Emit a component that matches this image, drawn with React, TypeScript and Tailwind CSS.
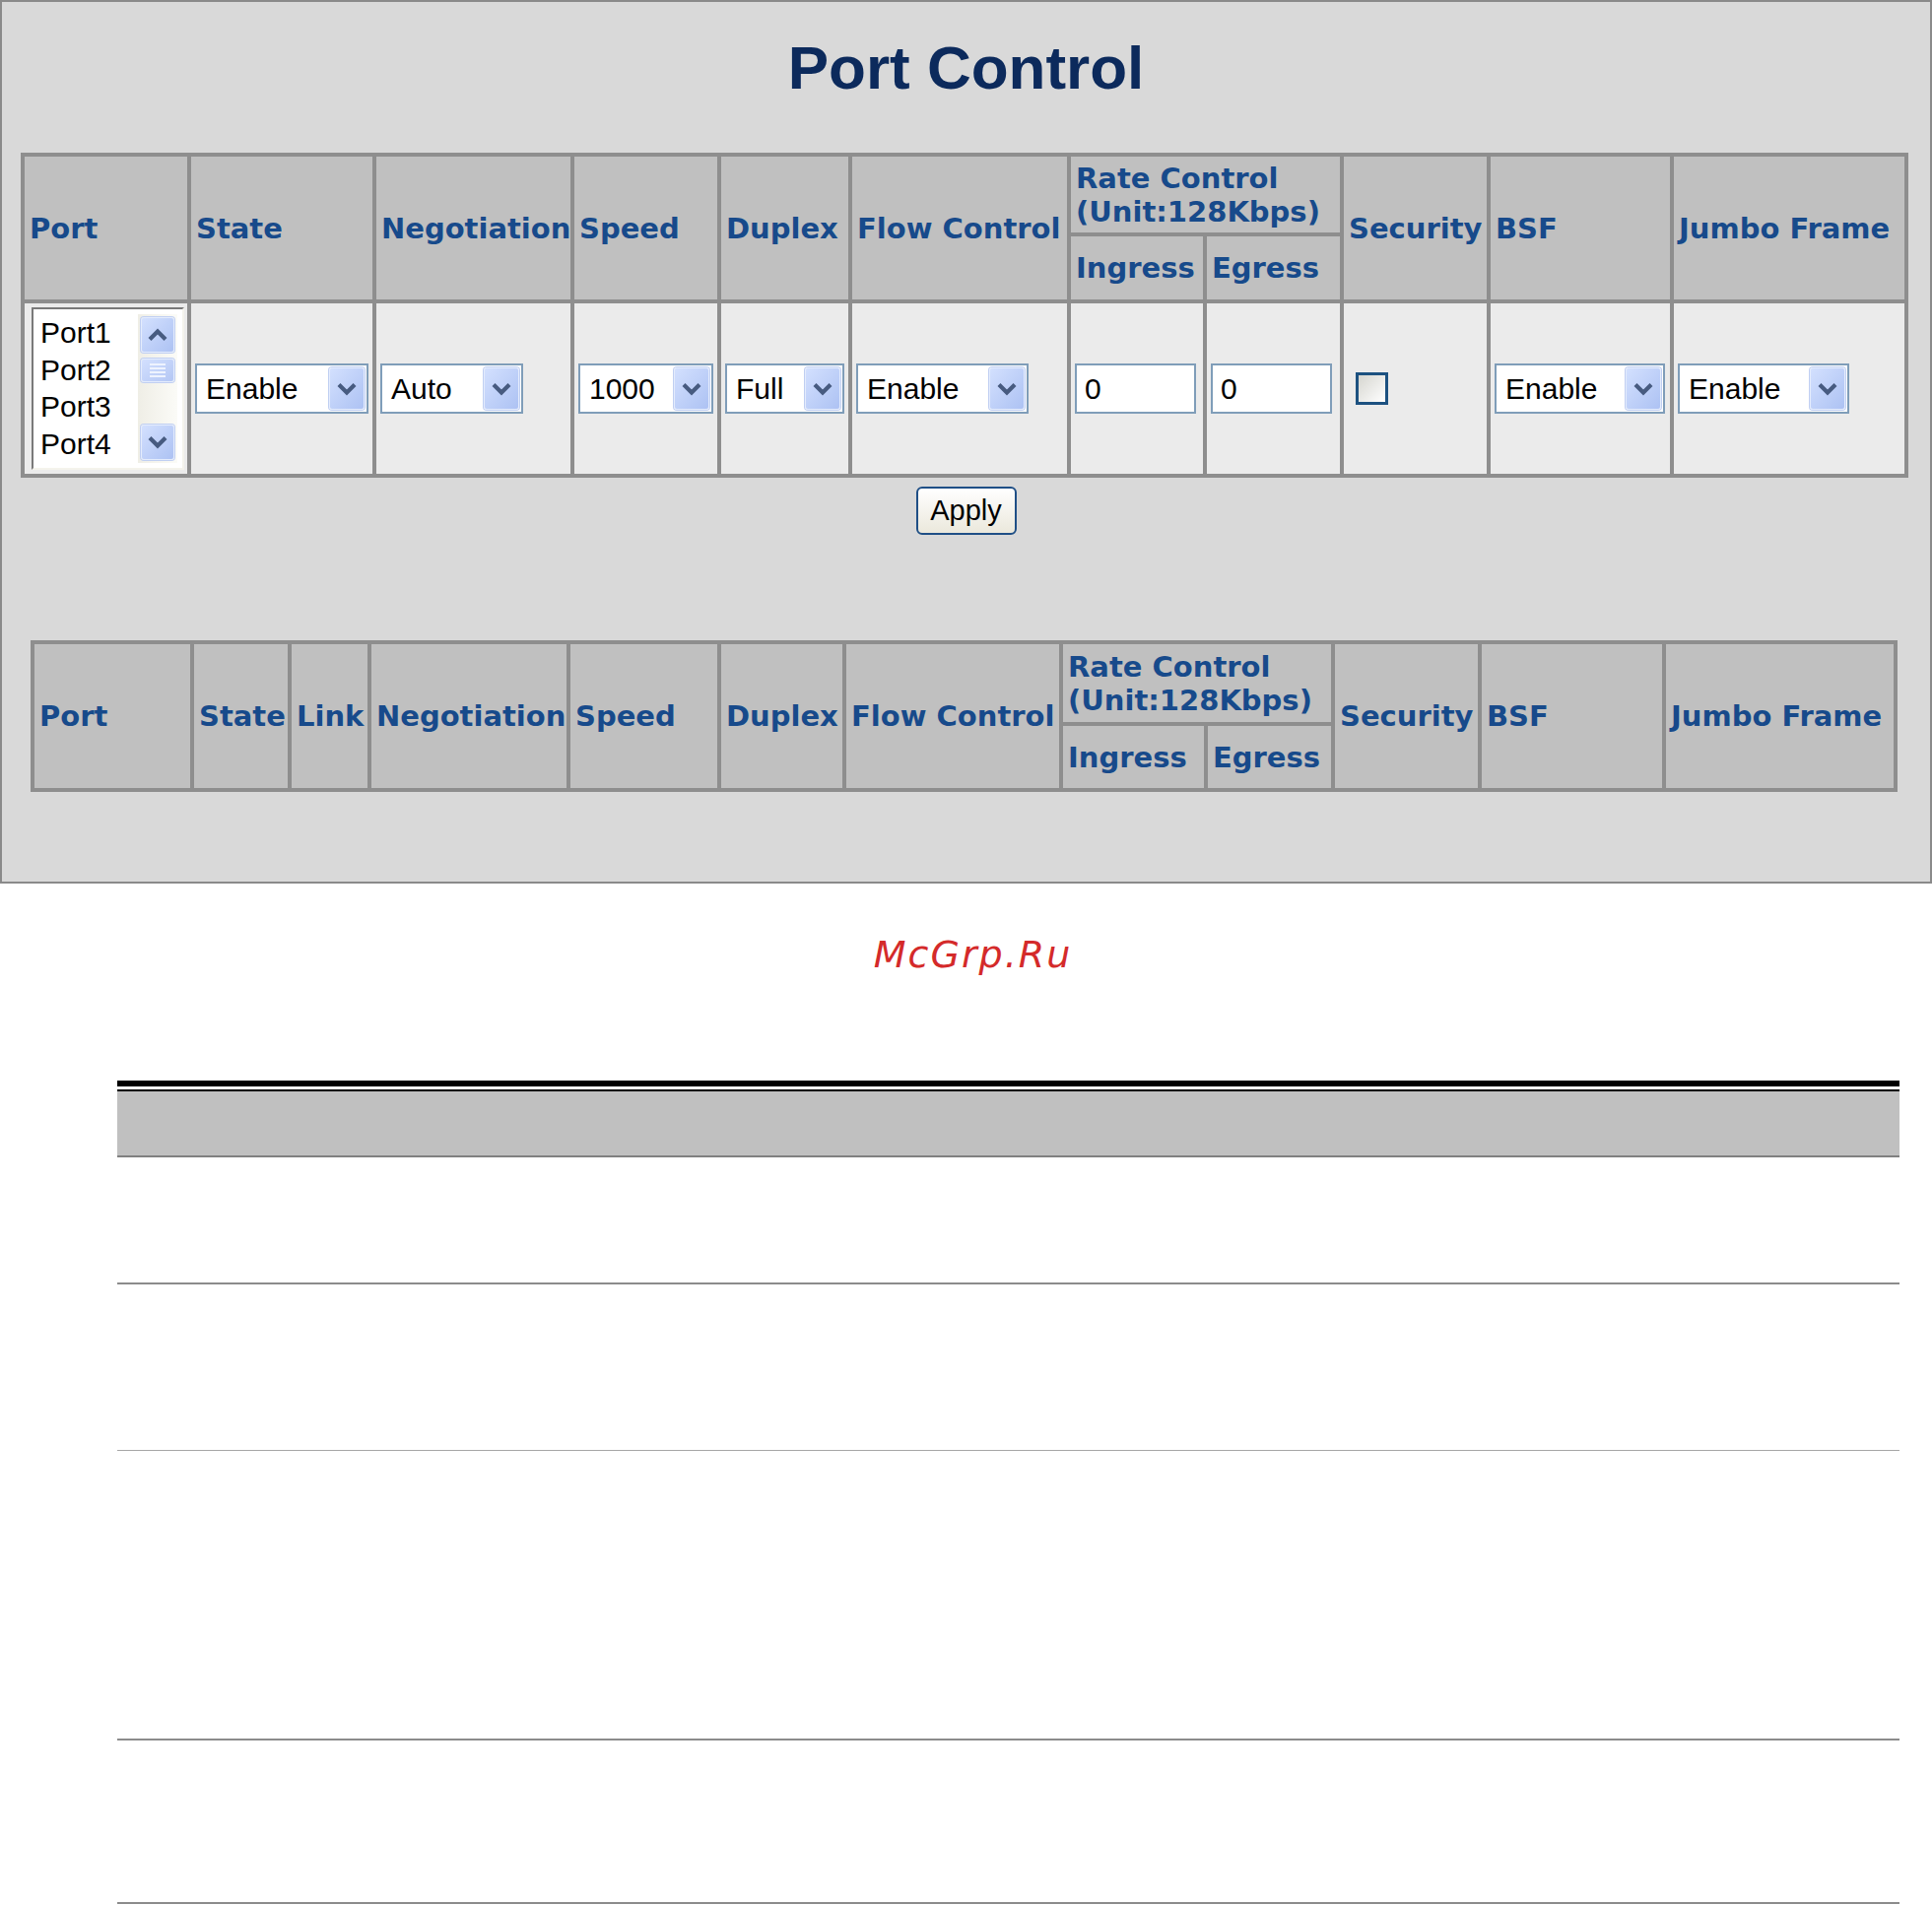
import React from "react";

const ports = ["Port1", "Port2", "Port3", "Port4"];

const Chevron = ({ up = false }: { up?: boolean }) => (
    <svg width="22" height="14" viewBox="0 0 22 14" fill="none">
        <path
            d={up ? "M3 11.5 L11 3.5 L19 11.5" : "M3 2.5 L11 10.5 L19 2.5"}
            stroke="#475b80"
            strokeWidth="4.2"
            strokeLinejoin="miter"
        />
    </svg>
);

const ArrowButton = ({ up = false, className = "h-[43px] w-[36px]" }: { up?: boolean; className?: string }) => (
    <div
        className={`${className} flex items-center justify-center rounded-[3px] border border-[#e4ecfd] bg-linear-to-br from-[#d3e0fe] to-[#adc2f3] shadow-[0_0_0_1px_#c0cff2]`}
    >
        <Chevron up={up} />
    </div>
);

const FakeSelect = ({ value, width }: { value: string; width: string }) => (
    <div className={`${width} flex h-[51px] items-center justify-between border-2 border-[#7f9db9] bg-white pl-[9px] pr-[2px]`}>
        <span className="text-[30px] leading-[34px] text-black">{value}</span>
        <ArrowButton />
    </div>
);

const FakeInput = () => (
    <input
        type="text"
        defaultValue="0"
        readOnly
        className="block h-[51px] w-[123px] border-2 border-[#7f9db9] bg-white pl-[8px] text-[30px] leading-[34px] text-black outline-none"
    />
);

const PortList = () => (
    <div className="ml-[3px] flex h-[165px] w-[155px] border-2 border-b-[#f4f3ec] border-l-[#7a7a7a] border-r-[#f4f3ec] border-t-[#7a7a7a] bg-white">
        <div className="flex-1 pl-[7px] pt-[5px] text-[30px] leading-[37.5px] text-black">
            {ports.map((p) => (
                <div key={p}>{p}</div>
            ))}
        </div>
        <div className="my-[5px] mr-[5px] flex w-[40px] flex-col bg-linear-to-r from-[#efeee6] to-[#fbfbf7] p-[3px]">
            <ArrowButton up className="h-[36px] w-full" />
            <div className="mt-[6px] flex h-[24px] w-full flex-col items-center justify-center gap-[2px] rounded-[3px] border border-[#e4ecfd] bg-linear-to-br from-[#d3e0fe] to-[#b4c7f4] shadow-[0_0_0_1px_#c0cff2]">
                <div className="h-[2px] w-[16px] bg-[#eef3fe]" />
                <div className="h-[2px] w-[16px] bg-[#eef3fe]" />
                <div className="h-[2px] w-[16px] bg-[#eef3fe]" />
                <div className="h-[2px] w-[16px] bg-[#eef3fe]" />
            </div>
            <div className="flex-1" />
            <ArrowButton className="h-[36px] w-full" />
        </div>
    </div>
);

const th = "border-4 border-[#8e8e8e] bg-[#c0c0c0] pl-[5px] text-left align-middle whitespace-nowrap";
const td = "border-4 border-[#8e8e8e] bg-[#ebebeb] px-[4px] align-middle";

export default function App() {
    return (
        <div className="w-[1961px] bg-white font-['Liberation_Sans',Arial,sans-serif]">
            {/* web page screenshot */}
            <div className="h-[897px] w-full border-2 border-[#8a8a8a] bg-[#d9d9d9]">
                <h1 className="mt-[36px] h-[62px] text-center text-[62px] leading-[62px] font-bold text-[#0c2a5c]">
                    Port Control
                </h1>

                <table className="mt-[55px] ml-[19px] w-[1912px] table-fixed font-['DejaVu_Sans',Verdana,sans-serif] text-[29px] leading-[34px] font-bold text-[#174a8b]">
                    <colgroup>
                        <col className="w-[169px]" />
                        <col className="w-[188px]" />
                        <col className="w-[201px]" />
                        <col className="w-[149px]" />
                        <col className="w-[133px]" />
                        <col className="w-[222px]" />
                        <col className="w-[138px]" />
                        <col className="w-[139px]" />
                        <col className="w-[149px]" />
                        <col className="w-[186px]" />
                        <col className="w-[238px]" />
                    </colgroup>
                    <tbody>
                        <tr className="h-[81px]">
                            <th rowSpan={2} className={th}>Port</th>
                            <th rowSpan={2} className={th}>State</th>
                            <th rowSpan={2} className={th}>Negotiation</th>
                            <th rowSpan={2} className={th}>Speed</th>
                            <th rowSpan={2} className={th}>Duplex</th>
                            <th rowSpan={2} className={th}>Flow Control</th>
                            <th colSpan={2} className={th}>
                                Rate Control
                                <br />
                                (Unit:128Kbps)
                            </th>
                            <th rowSpan={2} className={th}>Security</th>
                            <th rowSpan={2} className={th}>BSF</th>
                            <th rowSpan={2} className={th}>Jumbo Frame</th>
                        </tr>
                        <tr className="h-[68px]">
                            <th className={th}>Ingress</th>
                            <th className={th}>Egress</th>
                        </tr>
                        <tr className="h-[177px] font-['Liberation_Sans',Arial,sans-serif] font-normal">
                            <td className={td}>
                                <PortList />
                            </td>
                            <td className={td}>
                                <FakeSelect value="Enable" width="w-[176px]" />
                            </td>
                            <td className={td}>
                                <FakeSelect value="Auto" width="w-[145px]" />
                            </td>
                            <td className={td}>
                                <FakeSelect value="1000" width="w-[137px]" />
                            </td>
                            <td className={td}>
                                <FakeSelect value="Full" width="w-[121px]" />
                            </td>
                            <td className={td}>
                                <FakeSelect value="Enable" width="w-[175px]" />
                            </td>
                            <td className={td}>
                                <FakeInput />
                            </td>
                            <td className={td}>
                                <FakeInput />
                            </td>
                            <td className={td}>
                                <span className="ml-[8px] block h-[33px] w-[33px] border-[3px] border-[#1c5180] bg-linear-to-br from-[#d6d6d0] to-white" />
                            </td>
                            <td className={td}>
                                <FakeSelect value="Enable" width="w-[173px]" />
                            </td>
                            <td className={td}>
                                <FakeSelect value="Enable" width="w-[174px]" />
                            </td>
                        </tr>
                    </tbody>
                </table>

                <button className="mx-auto mt-[9px] block h-[49px] w-[102px] rounded-[6px] border-2 border-[#1f4f86] bg-linear-to-b from-white to-[#ebe8dc] text-[29px] leading-none text-black">
                    Apply
                </button>

                <table className="mt-[107px] ml-[29px] w-[1891px] table-fixed font-['DejaVu_Sans',Verdana,sans-serif] text-[29px] leading-[34px] font-bold text-[#174a8b]">
                    <colgroup>
                        <col className="w-[162px]" />
                        <col className="w-[99px]" />
                        <col className="w-[81px]" />
                        <col className="w-[202px]" />
                        <col className="w-[153px]" />
                        <col className="w-[127px]" />
                        <col className="w-[220px]" />
                        <col className="w-[147px]" />
                        <col className="w-[129px]" />
                        <col className="w-[149px]" />
                        <col className="w-[187px]" />
                        <col className="w-[235px]" />
                    </colgroup>
                    <tbody>
                        <tr className="h-[83px]">
                            <th rowSpan={2} className={th}>Port</th>
                            <th rowSpan={2} className={th}>State</th>
                            <th rowSpan={2} className={th}>Link</th>
                            <th rowSpan={2} className={th}>Negotiation</th>
                            <th rowSpan={2} className={th}>Speed</th>
                            <th rowSpan={2} className={th}>Duplex</th>
                            <th rowSpan={2} className={th}>Flow Control</th>
                            <th colSpan={2} className={th}>
                                Rate Control
                                <br />
                                (Unit:128Kbps)
                            </th>
                            <th rowSpan={2} className={th}>Security</th>
                            <th rowSpan={2} className={th}>BSF</th>
                            <th rowSpan={2} className={th}>Jumbo Frame</th>
                        </tr>
                        <tr className="h-[67px]">
                            <th className={th}>Ingress</th>
                            <th className={th}>Egress</th>
                        </tr>
                    </tbody>
                </table>
            </div>

            {/* document part below the screenshot */}
            <div className="mt-[50px] h-[44px] pl-[14px] text-center font-['DejaVu_Sans',Verdana,sans-serif] text-[38px] leading-[44px] tracking-[2px] text-[#d42a2a] italic">
                McGrp.Ru
            </div>

            <div className="mt-[106px] ml-[119px] w-[1809px]">
                <div className="h-[6px] bg-black" />
                <div className="mt-[3px] h-[2px] bg-black" />
                <div className="h-[67px] border-b-2 border-[#808080] bg-[#c0c0c0]" />
                <div className="h-[129px] border-b-2 border-[#8c8c8c]" />
                <div className="h-[169px] border-b border-[#a6a6a6]" />
                <div className="h-[294px] border-b-2 border-[#8c8c8c]" />
                <div className="h-[166px] border-b-2 border-[#8c8c8c]" />
            </div>
        </div>
    );
}
